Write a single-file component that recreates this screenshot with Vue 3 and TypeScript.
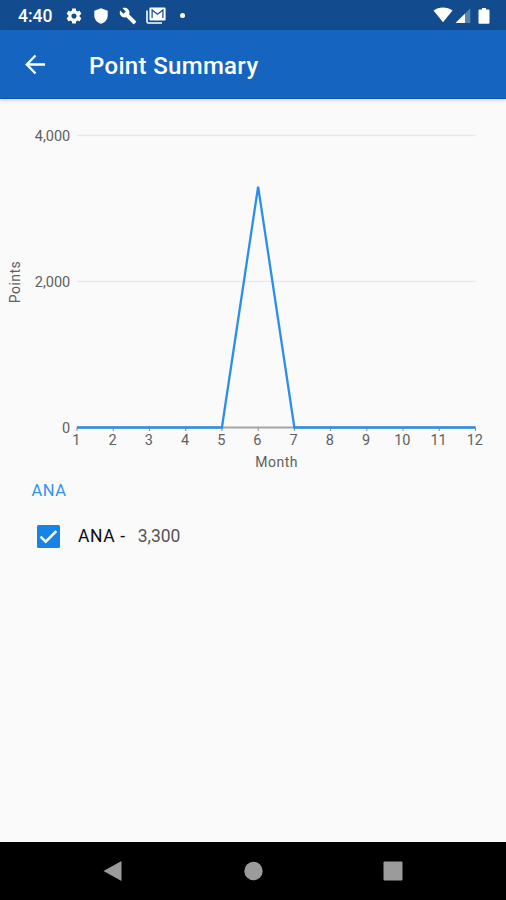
<script setup lang="ts">
import { ref, computed } from 'vue'

const LEFT = 77
const RIGHT = 475.5
const BASE = 328.5
const TOP = 36.5
const MAX = 4000

const points: number[] = [0, 0, 0, 0, 0, 3300, 0, 0, 0, 0, 0, 0]
const ticks: number[] = [4000, 2000, 0]
const checked = ref(true)

const xFor = (i: number): number => LEFT + (i * (RIGHT - LEFT)) / 11
const yFor = (v: number): number => BASE - (v * (BASE - TOP)) / MAX
const fmt = (v: number): string => v.toLocaleString('en-US')

const line = computed(() => points.map((v, i) => `${xFor(i)},${yFor(v)}`).join(' '))
const total = computed(() => fmt(points.reduce((a, b) => a + b, 0)))
</script>

<template>
  <div class="screen">
    <div class="status">
      <span class="time">4:40</span>
      <svg class="gear" viewBox="0 0 24 24"><path d="M19.43 12.98c.04-.32.07-.64.07-.98s-.03-.66-.07-.98l2.11-1.65c.19-.15.24-.42.12-.64l-2-3.46c-.12-.22-.39-.3-.61-.22l-2.49 1c-.52-.4-1.08-.73-1.69-.98l-.38-2.65C14.46 2.18 14.25 2 14 2h-4c-.25 0-.46.18-.49.42l-.38 2.65c-.61.25-1.17.59-1.69.98l-2.49-1c-.23-.09-.49 0-.61.22l-2 3.46c-.13.22-.07.49.12.64l2.11 1.65c-.04.32-.07.65-.07.98s.03.66.07.98l-2.11 1.65c-.19.15-.24.42-.12.64l2 3.46c.12.22.39.3.61.22l2.49-1c.52.4 1.08.73 1.69.98l.38 2.65c.03.24.24.42.49.42h4c.25 0 .46-.18.49-.42l.38-2.65c.61-.25 1.17-.59 1.69-.98l2.49 1c.23.09.49 0 .61-.22l2-3.46c.12-.22.07-.49-.12-.64l-2.11-1.65zM12 15.5c-1.93 0-3.5-1.57-3.5-3.5s1.57-3.5 3.5-3.5 3.500 1.570 3.500 3.500-1.570 3.500-3.500 3.500z" /></svg>
      <svg class="shield" viewBox="0 0 14 16"><path d="M7 0.300L13.700 2.700V7.500C13.700 11.500 11 14.700 7 15.800C3 14.700.3 11.500.3 7.500V2.700Z" /></svg>
      <svg class="wrench" viewBox="0 0 24 24"><path d="M22.700 19l-9.100-9.100c.9-2.300.4-5-1.500-6.900-2-2-5-2.400-7.400-1.300L9 6 6 9 1.600 4.700C.4 7.100.9 10.100 2.900 12.100c1.900 1.900 4.600 2.400 6.900 1.500l9.100 9.100c.4.4 1 .4 1.400 0l2.300-2.300c.5-.4.5-1.100.1-1.400z" /></svg>
      <svg class="mail" viewBox="0 0 20 17">
        <path d="M1 3.500V14.600Q1 16 2.400 16H16" fill="none" stroke="#fff" stroke-width="1.600" />
        <rect x="3.400" y=".5" width="16.200" height="13" rx="1.200" />
        <path d="M6.100 11V3L11.500 7.200L16.900 3V11" fill="none" stroke="#124c8f" stroke-width="1.200" />
      </svg>
      <i class="dot"></i>
      <svg class="signals" viewBox="0 0 58 18">
        <path d="M.5 3.600C5.800-.4 14.200-.4 19.500 3.600L10 15.200Z" />
        <path d="M32 6.500V16H22.500Z" />
        <path d="M32 6.500L37.300 1.200V16H32Z" fill-opacity=".3" />
        <path d="M49 1H53V2.500H55.500Q56.500 2.500 56.500 3.500V15.500Q56.500 16.700 55.500 16.700H46.500Q45.500 16.700 45.500 15.500V3.500Q45.500 2.500 46.500 2.500H49Z" />
      </svg>
    </div>

    <header class="appbar">
      <svg class="back" viewBox="0 0 22 22"><path d="M21 11H2.400M11 1.600L1.900 11L11 20.400" fill="none" stroke="#fff" stroke-width="2.500" /></svg>
      <h1>Point Summary</h1>
    </header>

    <main>
      <svg class="chart" viewBox="0 0 506 376">
        <g v-for="t in ticks" :key="t">
          <line :x1="LEFT" :x2="RIGHT" :y1="yFor(t)" :y2="yFor(t)" :class="t ? 'grid' : 'axis'" />
          <text x="70.200" :y="yFor(t) + 5" text-anchor="end">{{ fmt(t) }}</text>
        </g>
        <g v-for="(_, i) in points" :key="i">
          <line :x1="xFor(i)" :x2="xFor(i)" :y1="BASE" :y2="BASE + 3.500" class="tick" />
          <text :x="xFor(i) - 0.700" :y="BASE + 17.500" text-anchor="middle">{{ i + 1 }}</text>
        </g>
        <polyline v-if="checked" :points="line" class="series" />
        <text class="title" x="276.700" y="368" text-anchor="middle">Month</text>
        <text class="title" transform="translate(20 183) rotate(-90)" text-anchor="middle">Points</text>
      </svg>

      <h2>ANA</h2>
      <div class="row" @click="checked = !checked">
        <svg class="box" viewBox="0 0 23 23">
          <rect width="23" height="23" rx="1.500" fill="#1783e6" />
          <path v-if="checked" d="M3.500 11.600L8.700 16.700L19.300 6.200" fill="none" stroke="#fff" stroke-width="2.600" />
        </svg>
        <span class="name">ANA -</span>
        <span class="value">{{ total }}</span>
      </div>
    </main>

    <nav class="navbar">
      <svg viewBox="0 0 20 22"><path d="M18.500 1V21L.5 11Z" /></svg>
      <svg viewBox="0 0 20 22"><circle cx="10.500" cy="11" r="9.200" /></svg>
      <svg viewBox="0 0 20 22"><rect x=".5" y="1.500" width="19" height="19" rx="1" /></svg>
    </nav>
  </div>
</template>

<style>
body {
  margin: 0;
}
</style>

<style scoped>
.screen {
  display: flex;
  flex-direction: column;
  height: 900px;
  background: #fafafa;
  font-family: Roboto, sans-serif;
}
.status {
  display: flex;
  align-items: center;
  flex: none;
  box-sizing: border-box;
  height: 30px;
  padding: 1px 15px 0 18px;
  background: #124c8f;
}
.status svg {
  flex: none;
  fill: #fff;
}
.time {
  width: 47px;
  color: #fff;
  font-size: 17.500px;
  font-weight: 500;
  line-height: 30px;
}
.gear {
  width: 18px;
  height: 18px;
}
.shield {
  width: 14px;
  height: 16px;
  margin-left: 11px;
}
.wrench {
  width: 18px;
  height: 18px;
  margin-left: 11px;
}
.mail {
  width: 20px;
  height: 17px;
  margin-left: 9px;
}
.dot {
  width: 5px;
  height: 5px;
  margin-left: 14px;
  border-radius: 50%;
  background: #fff;
}
.signals {
  width: 58px;
  height: 18px;
  margin-left: auto;
}
.appbar {
  z-index: 1;
  display: flex;
  align-items: center;
  flex: none;
  box-sizing: border-box;
  height: 69px;
  padding: 0 24px 0 25px;
  background: #1565c0;
  border-bottom: 1px solid #0d56ad;
  box-shadow: 0 1px 4px rgba(0, 0, 0, 0.2);
}
.back {
  width: 21px;
  height: 21px;
}
h1 {
  margin: 3px 0 0 43px;
  color: #fff;
  font-size: 24px;
  font-weight: 500;
  letter-spacing: 0.320px;
  line-height: 32px;
}
main {
  flex: 1;
}
.chart {
  display: block;
  width: 506px;
  height: 376px;
}
.chart text {
  fill: #606060;
  font-size: 14.500px;
}
.chart .title {
  font-size: 14px;
  letter-spacing: 0.500px;
}
.grid {
  stroke: #e9e9e9;
  stroke-width: 1.500;
}
.axis {
  stroke: #a6a6a6;
  stroke-width: 2;
}
.tick {
  stroke: #888;
  stroke-width: 1;
}
.series {
  fill: none;
  stroke: #2b8eea;
  stroke-width: 2.300;
}
h2 {
  margin: 6px 0 0 31.500px;
  color: #3693ea;
  font-size: 16.500px;
  font-weight: 400;
  letter-spacing: 0.500px;
  line-height: 20px;
}
.row {
  display: flex;
  align-items: center;
  height: 24px;
  margin: 23px 0 0 37px;
  font-size: 17.500px;
}
.box {
  width: 23px;
  height: 23px;
}
.name {
  margin-left: 18px;
  color: #0c0c0c;
  letter-spacing: 0.600px;
}
.value {
  margin-left: 12px;
  color: #555;
}
.navbar {
  display: flex;
  align-items: center;
  justify-content: center;
  gap: 120px;
  flex: none;
  height: 58px;
  background: #000;
}
.navbar svg {
  width: 20px;
  height: 22px;
  fill: #9b9b9b;
}
</style>
